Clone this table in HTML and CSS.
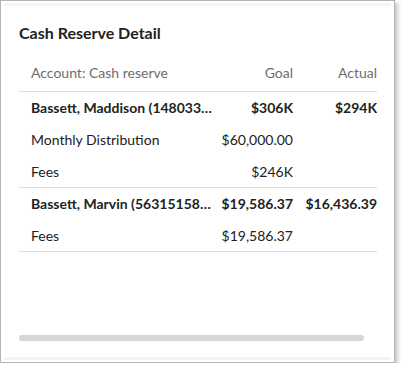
FILE: index.html
```html
<!DOCTYPE html>
<html>
<head>
<meta charset="utf-8">
<link rel="stylesheet" href="styles.css">
</head>
<body>
<div class="card">
  <div class="inner">
    <h2 class="title">Cash Reserve Detail</h2>
    <div class="scroller">
      <table class="grid">
        <colgroup>
          <col class="c1"><col class="c2"><col class="c3">
        </colgroup>
        <thead>
          <tr class="head">
            <th class="name">Account: Cash reserve</th>
            <th class="num">Goal</th>
            <th class="num last">Actual</th>
          </tr>
        </thead>
        <tbody>
          <tr class="acct">
            <td class="name">Bassett, Maddison (1480332456)</td>
            <td class="num">$306K</td>
            <td class="num last">$294K</td>
          </tr>
          <tr>
            <td class="name">Monthly Distribution</td>
            <td class="num">$60,000.00</td>
            <td class="num last"></td>
          </tr>
          <tr class="end">
            <td class="name">Fees</td>
            <td class="num">$246K</td>
            <td class="num last"></td>
          </tr>
          <tr class="acct">
            <td class="name">Bassett, Marvin (5631515829)</td>
            <td class="num">$19,586.37</td>
            <td class="num last">$16,436.39</td>
          </tr>
          <tr class="end">
            <td class="name">Fees</td>
            <td class="num">$19,586.37</td>
            <td class="num last"></td>
          </tr>
        </tbody>
      </table>
    </div>
    <div class="track"><div class="thumb"></div></div>
  </div>
</div>
</body>
</html>
```
FILE: styles.css
```css
html, body {
  margin: 0;
  padding: 0;
  background: #ffffff;
}
body {
  font-family: Lato, "Liberation Sans", sans-serif;
  color: #222222;
}
.card {
  border: 1px solid #b4b4b4;
  box-shadow: 3px 3px 4px rgba(0, 0, 0, 0.22);
  background: #ffffff;
  padding: 2px 3px;
  width: 387px;
  height: 357px;
}
.inner {
  height: 351px;
  border-top: 3px solid #f4f4f4;
  border-bottom: 3px solid #f4f4f4;
  padding: 0 15px;
  display: flex;
  flex-direction: column;
}
.title {
  margin: 0;
  padding-top: 17px;
  font-size: 16px;
  line-height: 20px;
  font-weight: 700;
  color: #222222;
}
.scroller {
  margin-top: 18px;
  width: 358px;
  overflow: hidden;
}
.grid {
  width: 371px;
  table-layout: fixed;
  border-collapse: collapse;
  font-size: 14px;
}
.c1 { width: 198px; }
.c2 { width: 76px; }
.c3 { width: 97px; }
th, td {
  padding: 0;
  height: 31.7px;
  white-space: nowrap;
  overflow: hidden;
  text-overflow: ellipsis;
}
.head th {
  height: 27px;
  font-weight: 400;
  color: #6e6e6e;
  border-bottom: 1px solid #dcdcdc;
  vertical-align: top;
  padding-top: 3px;
}
.name {
  text-align: left;
  padding-left: 12px;
}
.num {
  text-align: right;
}
.last {
  padding-right: 13px;
}
.acct td {
  font-weight: 700;
}
.end td {
  border-bottom: 1px solid #dcdcdc;
}
.track {
  margin-top: auto;
  margin-bottom: 16px;
  width: 358px;
}
.thumb {
  width: 345px;
  height: 6px;
  border-radius: 3px;
  background: #d6d6d6;
}
```
